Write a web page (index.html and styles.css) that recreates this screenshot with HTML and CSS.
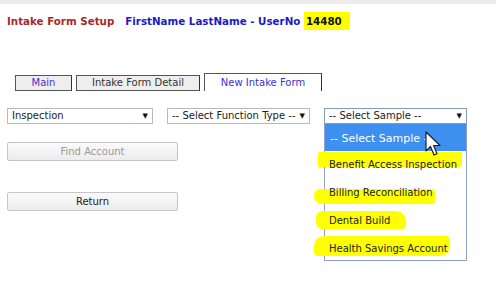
FILE: index.html
```html
<!DOCTYPE html>
<html lang="en">
<head>
  <meta charset="UTF-8">
  <title>Intake Form Setup</title>
  <link rel="stylesheet" href="styles.css">
</head>
<body>

<div class="topbar"></div>

<div class="header">
  <span class="title">Intake Form Setup</span>
  <span class="user">FirstName LastName - UserNo <span class="userno">14480</span></span>
</div>

<div class="tabs">
  <div class="tab">Main</div>
  <div class="tab tab-dark">Intake Form Detail</div>
  <div class="tab tab-active">New Intake Form</div>
</div>

<div class="filters">
  <div class="select sel-inspection">Inspection<span class="arrow">&#9660;</span></div>
  <div class="select sel-function">-- Select Function Type --<span class="arrow">&#9660;</span></div>
  <div class="sample-wrap">
    <div class="select sel-sample">-- Select Sample --<span class="arrow">&#9660;</span></div>
    <!-- open dropdown -->
    <div class="dropdown">
      <div class="option selected">-- Select Sample --</div>
      <div class="option"><span class="marker m1"></span>Benefit Access Inspection</div>
      <div class="option"><span class="marker m2"></span>Billing Reconciliation</div>
      <div class="option"><span class="marker m3"></span>Dental Build</div>
      <div class="option"><span class="marker m4"></span>Health Savings Account</div>
    </div>
    <svg class="cursor" width="18" height="28" viewBox="0 0 18 28">
      <path d="M1 1 L1 20 L5.5 15.5 L9 24 L12 22.7 L8.6 14.5 L15 14.5 Z" fill="#fff" stroke="#222" stroke-width="1.2" stroke-linejoin="round"/>
    </svg>
  </div>
</div>

<div class="buttons">
  <button class="btn" disabled>Find Account</button>
  <button class="btn btn-return">Return</button>
</div>

</body>
</html>
```

FILE: styles.css
```css
html {
  min-height: 100%;
}

body {
  margin: 0;
  min-height: 283px;
  font-family: "DejaVu Sans", Verdana, sans-serif;
  font-size: 10px;
  color: #222;
  background-color: #ffffff;
}

.topbar {
  height: 4px;
  background-color: #ececec;
}

.header {
  padding: 8px 0 0 7px;
  height: 18px;
  display: flex;
  align-items: center;
  font-weight: bold;
  font-size: 10.3px;
}

.title {
  color: #a52a2a;
  margin-right: 11px;
}

.user {
  color: #1c1cc4;
}

.userno {
  background-color: #ffff00;
  color: #111;
  padding: 3px 8px 3px 2px;
}

.tabs {
  display: flex;
  gap: 4px;
  margin: 43px 0 0 15px;
  align-items: flex-end;
}

.tab {
  box-sizing: border-box;
  height: 16px;
  width: 57px;
  border: 1px solid #555;
  border-right-color: #333;
  background-color: #eeeeee;
  color: #4a2fd0;
  text-align: center;
  line-height: 14px;
  font-size: 10px;
}

.tab-dark {
  width: 124px;
  color: #333;
}

.tab-active {
  width: 118px;
  height: 18px;
  background-color: #ffffff;
  color: #3b2fd0;
  border-bottom: none;
  line-height: 17px;
}

.filters {
  display: flex;
  margin: 17px 0 0 7px;
  align-items: flex-start;
}

.select {
  box-sizing: border-box;
  height: 16px;
  border: 1px solid #b8b8b8;
  padding: 0 4px;
  line-height: 14px;
  font-size: 10px;
  color: #222;
  display: flex;
  justify-content: space-between;
  background-color: #fff;
}

.arrow {
  font-size: 7px;
  color: #111;
}

.sel-inspection {
  width: 146px;
  margin-right: 14px;
}

.sel-function {
  width: 143px;
  margin-right: 14px;
}

.sample-wrap {
  position: relative;
}

.sel-sample {
  width: 143px;
  border-color: #7f9db9;
}

.dropdown {
  position: absolute;
  top: 16px;
  left: 0;
  z-index: 5;
  width: 143px;
  height: 137px;
  box-sizing: border-box;
  border: 1px solid #8ea2c9;
  border-top: none;
  background-color: #fff;
}

.option {
  position: relative;
  z-index: 0;
  height: 28px;
  line-height: 28px;
  padding-left: 4px;
  font-size: 10px;
  color: #222;
  white-space: nowrap;
}

.option.selected {
  background-color: #3d8ff0;
  color: #fff;
  height: 27px;
  line-height: 30px;
  font-size: 11px;
  padding-left: 5px;
}

/* hand-drawn highlighter strokes */
.marker {
  position: absolute;
  background-color: #ffff00;
  z-index: -1;
}

.m1 { left: -7px; top: 1px; width: 144px; height: 15px; border-radius: 2px 0 4px 0; }
.m2 { left: -11px; top: 10px; width: 121px; height: 15px; border-radius: 6px 3px 3px 8px; }
.m3 { left: -9px; top: 4px; width: 90px; height: 18px; border-radius: 6px 10px 4px 6px; }
.m4 { left: -11px; top: 1px; width: 136px; height: 20px; border-radius: 10px 4px 10px 4px; }

.cursor {
  position: absolute;
  left: 101px;
  top: 23px;
  z-index: 6;
}

.buttons {
  display: flex;
  flex-direction: column;
  align-items: flex-start;
  margin: 18px 0 0 7px;
  gap: 31px;
}

.btn {
  width: 171px;
  height: 19px;
  font-family: "DejaVu Sans", Verdana, sans-serif;
  font-size: 10px;
  border: 1px solid #c6c6c6;
  border-radius: 2px;
  background: linear-gradient(#fafafa, #ececec);
  color: #222;
  padding: 0;
}

.btn:disabled {
  color: #9a9a9a;
}
```
